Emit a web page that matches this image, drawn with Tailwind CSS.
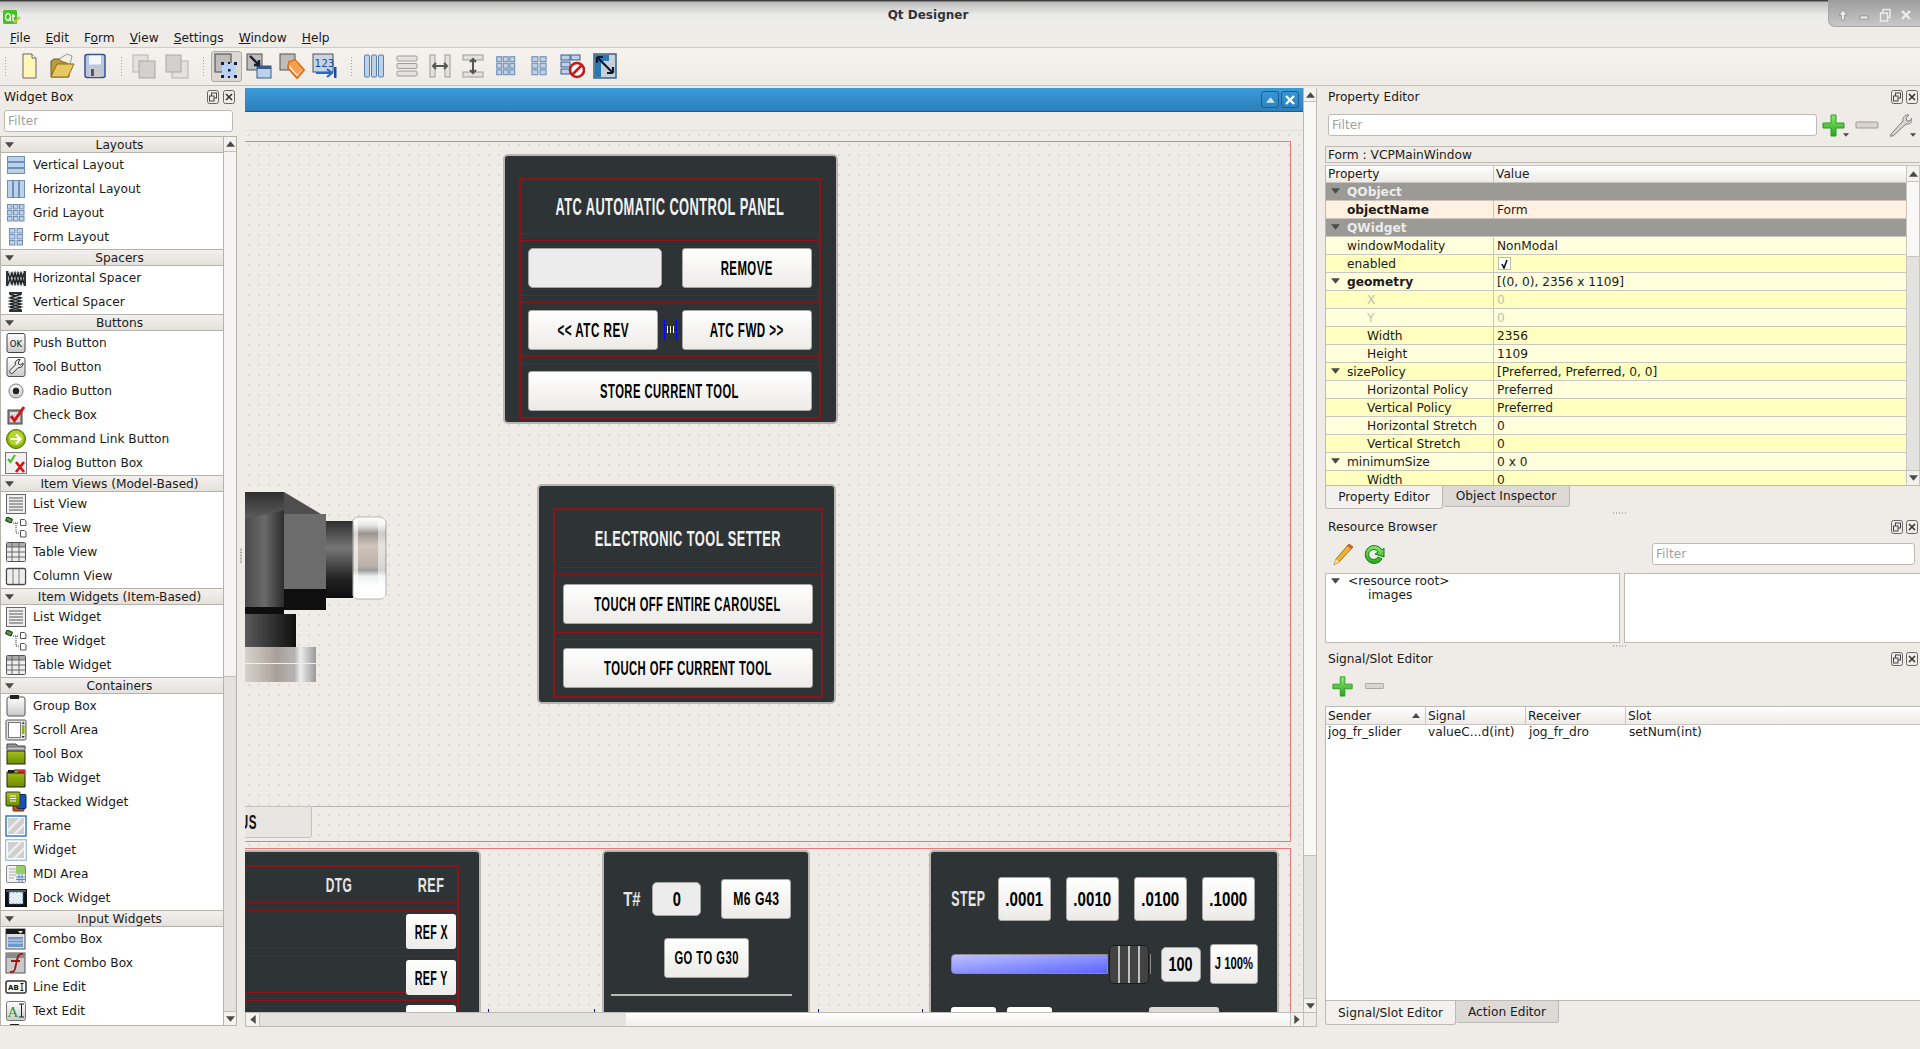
<!DOCTYPE html>
<html lang="en">
<head>
<meta charset="UTF-8" />
<title>Qt Designer</title>
<script src="https://cdn.jsdelivr.net/npm/@tailwindcss/browser@4"></script>
</head>
<body class="w-[1920px] h-[1049px] overflow-hidden flex flex-col bg-[#efebe7] text-[12.2px] leading-[12px] text-[#1a1a1a] font-['DejaVu_Sans',sans-serif]">

<svg class="absolute w-0 h-0">
  <defs>
    <linearGradient id="chromeH" x1="0" x2="1" y1="0" y2="0"><stop offset="0" stop-color="#d9d3cd"/><stop offset=".45" stop-color="#a99f98"/><stop offset=".7" stop-color="#b5b5b5"/><stop offset=".78" stop-color="#ececec"/><stop offset="1" stop-color="#9a9a9a"/></linearGradient>
    <linearGradient id="chromeV" x1="0" x2="0" y1="0" y2="1"><stop offset="0" stop-color="#fff"/><stop offset=".1" stop-color="#e8e8e8"/><stop offset=".2" stop-color="#9c9490"/><stop offset=".35" stop-color="#cfc5bd"/><stop offset=".6" stop-color="#b9b0a9"/><stop offset=".65" stop-color="#9d9d9d"/><stop offset=".72" stop-color="#ecf0f0"/><stop offset=".85" stop-color="#fff"/><stop offset="1" stop-color="#fff"/></linearGradient>
    <linearGradient id="bodyH" x1="0" x2="1" y1="0" y2="0"><stop offset="0" stop-color="#4a4a4a"/><stop offset=".5" stop-color="#6a6a6a"/><stop offset="1" stop-color="#2c2c2c"/></linearGradient>
    <linearGradient id="lowH" x1="0" x2="1" y1="0" y2="0"><stop offset="0" stop-color="#5a5a5a"/><stop offset="1" stop-color="#0f0f0f"/></linearGradient>
    <linearGradient id="neckV" x1="0" x2="0" y1="0" y2="1"><stop offset="0" stop-color="#2e2e2e"/><stop offset=".35" stop-color="#777"/><stop offset=".75" stop-color="#222"/><stop offset="1" stop-color="#0d0d0d"/></linearGradient>
    <linearGradient id="topV" x1="0" x2="0" y1="0" y2="1"><stop offset="0" stop-color="#2e2e2e"/><stop offset="1" stop-color="#5c5c5c"/></linearGradient>
    <linearGradient id="green" x1="0" x2="0" y1="0" y2="1"><stop offset="0" stop-color="#8de873"/><stop offset="1" stop-color="#22a51a"/></linearGradient>
    <linearGradient id="olive" x1="0" x2="0" y1="0" y2="1"><stop offset="0" stop-color="#a9c21a"/><stop offset="1" stop-color="#6c8c00"/></linearGradient>
    <linearGradient id="paper" x1="0" x2="0" y1="0" y2="1"><stop offset="0" stop-color="#ffffff"/><stop offset="1" stop-color="#c9c9c9"/></linearGradient>
  </defs>
  <symbol id="vl" viewBox="0 0 22 22"><g fill="#bcd2ea" stroke="#6f8fb3"><rect x="2.5" y="2.5" width="17" height="5"/><rect x="2.5" y="8.5" width="17" height="5"/><rect x="2.5" y="14.5" width="17" height="5"/></g></symbol>
  <symbol id="hl" viewBox="0 0 22 22"><g fill="#bcd2ea" stroke="#6f8fb3"><rect x="2.5" y="2.5" width="5" height="17"/><rect x="8.5" y="2.5" width="5" height="17"/><rect x="14.5" y="2.5" width="5" height="17"/></g></symbol>
  <symbol id="gl" viewBox="0 0 22 22"><g fill="#bcd2ea" stroke="#6f8fb3"><rect x="2.5" y="2.5" width="4.5" height="4.5"/><rect x="8.5" y="2.5" width="4.5" height="4.5"/><rect x="14.5" y="2.5" width="4.5" height="4.5"/><rect x="2.5" y="8.5" width="4.5" height="4.5"/><rect x="8.5" y="8.5" width="4.5" height="4.5"/><rect x="14.5" y="8.5" width="4.5" height="4.5"/><rect x="2.5" y="14.5" width="4.5" height="4.5"/><rect x="8.5" y="14.5" width="4.5" height="4.5"/><rect x="14.5" y="14.5" width="4.5" height="4.5"/></g></symbol>
  <symbol id="fl" viewBox="0 0 22 22"><g fill="#bcd2ea" stroke="#6f8fb3"><rect x="4.5" y="2.5" width="5.5" height="4.5"/><rect x="12" y="2.5" width="5.5" height="4.5"/><rect x="4.5" y="8.5" width="5.5" height="4.5"/><rect x="12" y="8.5" width="5.5" height="4.5"/><rect x="4.5" y="14.5" width="5.5" height="4.5"/><rect x="12" y="14.5" width="5.5" height="4.5"/></g></symbol>
  <symbol id="hs" viewBox="0 0 22 22"><rect x="1" y="4" width="2.5" height="15" fill="#333"/><rect x="18.5" y="4" width="2.5" height="15" fill="#333"/><rect x="3" y="5" width="16" height="13" fill="#b8c4cc"/><path d="M3 6l4 11 3-11 3 11 3-11 3 11M3 17l4-11 3 11 3-11 3 11 3-11" fill="none" stroke="#222" stroke-width="1.4"/></symbol>
  <symbol id="vs" viewBox="0 0 22 22"><rect x="4" y="1" width="13" height="2.5" fill="#333"/><rect x="4" y="18.5" width="13" height="2.5" fill="#333"/><rect x="5" y="3" width="11" height="16" fill="#b8c4cc"/><path d="M5 3l11 4-11 3 11 3-11 3 11 3M16 3L5 7l11 3-11 3 11 3-11 3" fill="none" stroke="#222" stroke-width="1.4"/></symbol>
  <symbol id="tb" viewBox="0 0 22 22"><rect x="2" y="1.5" width="18" height="19" rx="2" fill="url(#paper)" stroke="#555"/><path d="M14 3.5a4 4 0 0 0-3.6 5.4L5 14.3a2 2 0 0 0 2.8 2.8l5.4-5.4A4 4 0 0 0 18 7l-2.6 2-2-1 .3-2.4 1.6-2z" fill="#e8e8e8" stroke="#333"/></symbol>
  <symbol id="rb" viewBox="0 0 22 22"><circle cx="11" cy="11" r="7" fill="url(#paper)" stroke="#777"/><circle cx="11" cy="11" r="3.2" fill="#222"/></symbol>
  <symbol id="cb" viewBox="0 0 22 22"><rect x="3" y="6" width="14" height="14" fill="#8c8c8c" stroke="#444"/><rect x="5" y="8" width="10" height="10" fill="#ddd"/><path d="M6 12l3.5 4.5L19 3" fill="none" stroke="#d41217" stroke-width="3"/></symbol>
  <symbol id="cl" viewBox="0 0 22 22"><circle cx="11" cy="11" r="9.5" fill="#8ab40c" stroke="#4e6c00"/><circle cx="11" cy="10" r="7.5" fill="#b5d52a"/><path d="M5.5 11h9M11 6.5l4.5 4.5-4.5 4.5" fill="none" stroke="#fff" stroke-width="2.2"/></symbol>
  <symbol id="db" viewBox="0 0 22 22"><rect x=".5" y=".5" width="21" height="21" fill="#f1f1f1" stroke="#777"/><path d="M3 7l2.5 3L10 3" fill="none" stroke="#4bb82a" stroke-width="2"/><path d="M11 10l8 10M19 10l-8 10" stroke="#d41217" stroke-width="2.6"/></symbol>
  <symbol id="lv" viewBox="0 0 22 22"><rect x="1.5" y="1.5" width="19" height="19" fill="#efefef" stroke="#666"/><path d="M4 5h14M4 8h14M4 11h14M4 14h14M4 17h14" stroke="#8b8b8b" stroke-width="1.6"/></symbol>
  <symbol id="tv" viewBox="0 0 22 22"><rect x="1" y="1" width="6" height="4" rx="1" fill="#4aa32a" stroke="#224" transform="rotate(25 4 3)"/><path d="M8 6h6M11 6v10h3" fill="none" stroke="#333" stroke-dasharray="1 1"/><path d="M15.5 2.5h4l1.5 1.5v4.5h-5.5zM15.5 13.5h4l1.5 1.5v5h-5.5z" fill="#fff" stroke="#555"/></symbol>
  <symbol id="tbv" viewBox="0 0 22 22"><rect x="1.5" y="1.5" width="19" height="19" rx="1" fill="#eee" stroke="#555"/><rect x="2" y="2" width="18" height="4" fill="#aaa"/><path d="M1.5 6h19M1.5 11h19M1.5 16h19M7 1.5v19M14 1.5v19" stroke="#666"/></symbol>
  <symbol id="cv" viewBox="0 0 22 22"><rect x="1.5" y="3.5" width="19" height="16" rx="1.5" fill="#fff" stroke="#444" stroke-width="1.3"/><path d="M8 3.5v16M14 3.5v16" stroke="#666"/><rect x="3" y="5" width="4" height="13" fill="#eee"/><rect x="9" y="5" width="4" height="13" fill="#eee"/><rect x="15" y="5" width="4" height="13" fill="#eee"/></symbol>
  <symbol id="gb" viewBox="0 0 22 22"><rect x="2" y="2" width="18" height="19" rx="2" fill="url(#paper)" stroke="#555"/><rect x="5" y="0" width="9" height="4" fill="#222"/></symbol>
  <symbol id="sa" viewBox="0 0 22 22"><rect x="1" y="1" width="20" height="20" rx="1.5" fill="#e4e4e4" stroke="#555"/><rect x="3.5" y="3.5" width="12" height="15" fill="#fff" stroke="#777"/><rect x="17" y="6" width="2.5" height="9" fill="#8ab40c"/><path d="M18.2 2.8l-1.5 2h3zM18.2 19l-1.5-2h3z" fill="#222"/></symbol>
  <symbol id="tx" viewBox="0 0 22 22"><path d="M2 1h9l2 2h7v3H2z" fill="#999" stroke="#444"/><path d="M2 4h18v3H2z" fill="#ccc" stroke="#666"/><rect x="2" y="8" width="18" height="13" fill="url(#olive)" stroke="#222"/></symbol>
  <symbol id="tw" viewBox="0 0 22 22"><path d="M2 5h7V3h11v17H2z" fill="url(#olive)" stroke="#222"/><rect x="3" y="3" width="6" height="3" fill="#1c1c1c"/><rect x="13" y="3" width="7" height="3" fill="#d12b2b"/><path d="M3 6h16" stroke="#222"/></symbol>
  <symbol id="sw" viewBox="0 0 22 22"><rect x="8" y="6" width="11" height="14" rx="1" fill="#c85010" stroke="#5a2a00"/><rect x="12" y="3.5" width="9" height="14" rx="1" fill="#1552b8" stroke="#0a2a60"/><rect x="1" y="1" width="14" height="14" rx="1" fill="url(#olive)" stroke="#333"/><path d="M5 5h6M5 7.5h6M5 10h6" stroke="#fff" stroke-width="1.2"/></symbol>
  <symbol id="fr" viewBox="0 0 22 22"><rect x="1" y="1" width="20" height="20" fill="#fff" stroke="#2a6fc4" stroke-width="1.4"/><rect x="3" y="3" width="16" height="16" fill="#cfcfcf"/><path d="M3 14l11-11h3L3 17zM8 19L19 8v3l-8 8z" fill="#f1f1f1"/></symbol>
  <symbol id="wd" viewBox="0 0 22 22"><rect x=".8" y=".8" width="20.4" height="20.4" fill="#fff" stroke="#7aa7d8"/><rect x="3" y="3" width="16" height="16" fill="#cfcfcf"/><path d="M3 14l11-11h3L3 17zM8 19L19 8v3l-8 8z" fill="#f1f1f1"/></symbol>
  <symbol id="mdi" viewBox="0 0 22 22"><rect x="1.5" y="2.5" width="19" height="17" rx="1.5" fill="#f2f2f2" stroke="#888"/><path d="M4 6h7M4 9h7M4 12h7M4 15h5" stroke="#aaa"/><rect x="11" y="3" width="9" height="8" fill="#96cf6a"/><rect x="11" y="11" width="9" height="8" fill="#e8eef6"/><path d="M11 14h9M11 16.5h9M14 11v8M17 11v8" stroke="#5a86c8"/></symbol>
  <symbol id="dw" viewBox="0 0 22 22"><rect x="0" y="2" width="22" height="18" fill="#111"/><rect x="1" y="3" width="20" height="2" fill="#555"/><rect x="4" y="5" width="14" height="12" fill="#e6ecf2" stroke="#2a6fc4" stroke-dasharray="2 1.5"/></symbol>
  <symbol id="co" viewBox="0 0 22 22"><rect x="1" y="1" width="19" height="20" fill="#ddd" stroke="#555"/><rect x="1" y="1" width="19" height="5" fill="#1a1a1a"/><path d="M13 3h5l-2.5 2.5z" fill="#fff"/><rect x="3" y="9" width="15" height="10" fill="#6e98c8"/><path d="M3 12h15M3 15h15" stroke="#cfdfee"/></symbol>
  <symbol id="fc" viewBox="0 0 22 22"><rect x="1" y="1" width="19" height="20" fill="#c9c9c9" stroke="#555"/><rect x="1" y="1" width="19" height="5" fill="#8c8c8c"/><path d="M18 2c-4-1-5 2-6 6l-2 9c-1 3-2 3-5 3M6 9h9" fill="none" stroke="#a01515" stroke-width="1.8"/></symbol>
  <symbol id="flt" viewBox="0 0 12 14"><rect x=".5" y=".5" width="11" height="13" rx="2" fill="none" stroke="#666"/><rect x="4.5" y="3" width="5" height="5" fill="none" stroke="#444"/><rect x="2.5" y="6" width="4.5" height="5" fill="#efebe7" stroke="#444"/></symbol>
  <symbol id="cls" viewBox="0 0 12 14"><rect x=".5" y=".5" width="11" height="13" rx="2" fill="none" stroke="#666"/><path d="M3 4l6 6M9 4l-6 6" stroke="#333" stroke-width="1.6"/></symbol>
  <symbol id="plus" viewBox="0 0 24 24"><path d="M9 2h5v8h8v5h-8v8H9v-8H1v-5h8z" fill="url(#green)" stroke="#2f9a22"/></symbol>
  <symbol id="minus" viewBox="0 0 24 12"><rect x="1" y="3" width="22" height="6" rx="1" fill="#d8d6d2" stroke="#9d9b97"/></symbol>
  <symbol id="tri" viewBox="0 0 10 6"><path d="M0 0h10L5 6z" fill="#4a4a4a"/></symbol>
</svg>

<!-- title bar -->
<div class="relative h-[29px] shrink-0 flex items-center justify-center pr-[64px] bg-[linear-gradient(#3f3f3f_0,#3f3f3f_1px,#bdbdbd_2px,#ebebea_15px,#efeeec_29px)]">
  <svg class="absolute left-[3px] top-[9px]" width="18" height="16" viewBox="0 0 18 16"><rect x="0" y="1" width="14" height="14" rx="1.5" fill="#44c41f"/><path d="M5 4.500a2.500 3.500 0 1 0 .01 0zM6 9l2 3M10 5v6q0 1 2 1M9 7h3" fill="none" stroke="#fff" stroke-width="1.300"/><path d="M11 14l6-6" stroke="#e8b030" stroke-width="2"/></svg>
  <span class="font-bold text-[12px] text-[#333] pt-[1px]">Qt Designer</span>
  <div class="absolute right-0 top-0 w-[92px] h-[27px] rounded-bl-[7px] border-l border-b border-[#a6a6a6] flex items-center justify-around px-[4px] pt-[3px] bg-linear-to-b from-[#9d9d9d] to-[#c8c8c8]">
    <svg width="12" height="12" viewBox="0 0 12 12"><path d="M6 1l4 5H7.5v5h-3V6H2z" fill="#eee" stroke="#777" stroke-width=".6"/></svg>
    <svg width="12" height="12" viewBox="0 0 12 12"><rect x="2" y="7" width="8" height="3" fill="#eee" stroke="#777" stroke-width=".6"/></svg>
    <svg width="12" height="14" viewBox="0 0 12 14"><rect x="4" y="1.5" width="7" height="8" fill="none" stroke="#eee" stroke-width="1.4"/><rect x="1.5" y="5" width="7" height="8" fill="#bbb" stroke="#eee" stroke-width="1.4"/></svg>
    <svg width="12" height="12" viewBox="0 0 12 12"><path d="M2 2l8 8M10 2l-8 8" stroke="#eee" stroke-width="2.4"/></svg>
  </div>
</div>

<!-- menu bar -->
<div class="h-[19px] shrink-0 flex items-center gap-[15px] pl-[10px] pb-[1px] border-b border-[#d0ccc7]">
  <span><u>F</u>ile</span><span><u>E</u>dit</span><span>F<u>o</u>rm</span><span><u>V</u>iew</span><span><u>S</u>ettings</span><span><u>W</u>indow</span><span><u>H</u>elp</span>
</div>

<!-- toolbar -->
<div class="h-[38px] shrink-0 flex items-center pb-[1px] border-b border-[#c3bfba] bg-linear-to-b from-[#f6f3ef] to-[#efebe7]">
  <div class="w-[12.5px] h-[20px] flex justify-center"><div class="w-[4px] h-full bg-[radial-gradient(#a5a29d_0.7px,transparent_0.9px)] bg-[length:3px_3px]"></div></div>
  <div class="w-[33px] flex justify-center"><svg width="24" height="26" viewBox="0 0 24 26"><path d="M6 1h9l4 4v20H6z" fill="#fff6b8" stroke="#666"/><path d="M15 1v4h4" fill="#fff" stroke="#666"/></svg></div>
  <div class="w-[33px] flex justify-center"><svg width="26" height="26" viewBox="0 0 26 26"><path d="M2 24V8l3-2h6l2 3h7v15z" fill="#b89a3c" stroke="#6e5a1a"/><path d="M10 6l8-5 5 2-2 8" fill="#f4efe0" stroke="#999"/><path d="M2 24L8 11h17l-6 13z" fill="#e8c860" stroke="#8a6e1e"/></svg></div>
  <div class="w-[33px] flex justify-center"><svg width="24" height="26" viewBox="0 0 24 26"><rect x="2" y="1.5" width="20" height="23" rx="2" fill="#b9c8dc" stroke="#34548c" stroke-width="1.5"/><rect x="6" y="2.5" width="12" height="9" fill="#f4f6fa"/><rect x="6" y="15" width="12" height="9" fill="#c9c9c9"/><rect x="8" y="16" width="3" height="7" fill="#556"/></svg></div>
  <div class="w-[16px] h-[20px] flex justify-center pl-[5px]"><div class="w-[4px] h-full bg-[radial-gradient(#a5a29d_0.7px,transparent_0.9px)] bg-[length:3px_3px]"></div></div>
  <div class="w-[33px] flex justify-center"><svg width="24" height="26" viewBox="0 0 24 26"><rect x="1" y="2" width="15" height="17" fill="#e4e2de" stroke="#b5b3ae"/><rect x="7" y="8" width="16" height="17" fill="#d3d1cd" stroke="#a9a7a2"/></svg></div>
  <div class="w-[33px] flex justify-center"><svg width="24" height="26" viewBox="0 0 24 26"><rect x="7" y="8" width="16" height="17" fill="#e4e2de" stroke="#b5b3ae"/><rect x="1" y="2" width="15" height="17" fill="#d3d1cd" stroke="#a9a7a2"/></svg></div>
  <div class="w-[16px] h-[20px] flex justify-center pl-[5px]"><div class="w-[4px] h-full bg-[radial-gradient(#a5a29d_0.7px,transparent_0.9px)] bg-[length:3px_3px]"></div></div>
  <div class="w-[33px] flex justify-center"><div class="w-[31px] h-[31px] flex items-center justify-center rounded-[3px] border border-[#aeaba6] bg-[#dcd9d5]"><svg width="26" height="26" viewBox="0 0 26 26"><rect x="2" y="1" width="16" height="18" fill="#bfbdb9" stroke="#444"/><rect x="9" y="10" width="14" height="14" fill="#bcd2f4"/><g fill="#12203c"><rect x="8" y="9" width="3" height="3"/><rect x="21" y="9" width="3" height="3"/><rect x="8" y="22" width="3" height="3"/><rect x="21" y="22" width="3" height="3"/><rect x="15" y="16" width="2.5" height="2.5"/><rect x="15" y="9" width="2" height="2"/><rect x="15" y="23" width="2" height="2"/></g></svg></div></div>
  <div class="w-[33px] flex justify-center"><svg width="26" height="26" viewBox="0 0 26 26"><rect x="1" y="1" width="15" height="16" fill="#bfbdb9" stroke="#555"/><rect x="11" y="13" width="14" height="12" fill="#bcd2ea" stroke="#3a5a88"/><rect x="11" y="13" width="14" height="3" fill="#3a5a88"/><path d="M4 3l9 9M13 7v5H8" fill="none" stroke="#12203c" stroke-width="2.4"/></svg></div>
  <div class="w-[33px] flex justify-center"><svg width="26" height="26" viewBox="0 0 26 26"><rect x="1" y="1" width="15" height="16" fill="#bfbdb9" stroke="#555"/><path d="M10 9l6-2 9 10-7 8-9-10z" fill="#fff" stroke="#e0701a" stroke-width="2"/><path d="M11 9l6-1 6 9-5 5-7-9z" fill="#f6a050"/></svg></div>
  <div class="w-[33px] flex justify-center"><svg width="26" height="26" viewBox="0 0 26 26"><rect x="1" y="1" width="20" height="18" fill="#c8d4e4" stroke="#555"/><text x="2.5" y="14" font-size="10.5" font-family="DejaVu Sans" fill="#1a4aa8">123</text><path d="M4 20h15M15 16l5 4-5 4" fill="none" stroke="#2a6ac4" stroke-width="2.2"/><rect x="22" y="14" width="2.5" height="11" fill="#1a4aa8"/></svg></div>
  <div class="w-[16px] h-[20px] flex justify-center pl-[5px]"><div class="w-[4px] h-full bg-[radial-gradient(#a5a29d_0.7px,transparent_0.9px)] bg-[length:3px_3px]"></div></div>
  <div class="w-[33px] flex justify-center"><svg width="24" height="26" viewBox="0 0 24 26"><g fill="#bcd2ea" stroke="#5a7fa8"><rect x="2.5" y="2" width="5" height="22" rx="1"/><rect x="9.5" y="2" width="5" height="22" rx="1"/><rect x="16.5" y="2" width="5" height="22" rx="1"/></g></svg></div>
  <div class="w-[33px] flex justify-center"><svg width="24" height="26" viewBox="0 0 24 26"><g fill="#e4e2de" stroke="#9f9d98"><rect x="2" y="3" width="20" height="5" rx="1"/><rect x="2" y="10.5" width="20" height="5" rx="1"/><rect x="2" y="18" width="20" height="5" rx="1"/></g></svg></div>
  <div class="w-[33px] flex justify-center"><svg width="24" height="26" viewBox="0 0 24 26"><g fill="#e4e2de" stroke="#9f9d98"><rect x="2" y="2" width="5" height="22"/><rect x="17" y="2" width="5" height="22"/></g><path d="M6 13h12M8 10l-3 3 3 3M16 10l3 3-3 3" fill="none" stroke="#555" stroke-width="2"/></svg></div>
  <div class="w-[33px] flex justify-center"><svg width="24" height="26" viewBox="0 0 24 26"><g fill="#e4e2de" stroke="#9f9d98"><rect x="2" y="2" width="20" height="5"/><rect x="2" y="19" width="20" height="5"/></g><path d="M12 6v14M9 9l3-3 3 3M9 17l3 3 3-3" fill="none" stroke="#555" stroke-width="2"/></svg></div>
  <div class="w-[33px] flex justify-center"><svg width="24" height="24" viewBox="0 0 22 22"><use href="#gl"/></svg></div>
  <div class="w-[33px] flex justify-center"><svg width="24" height="24" viewBox="0 0 22 22"><use href="#fl"/></svg></div>
  <div class="w-[33px] flex justify-center"><svg width="26" height="26" viewBox="0 0 26 26"><g fill="#bcd2ea" stroke="#3a5a88"><rect x="2" y="2" width="9" height="5"/><rect x="12" y="2" width="9" height="5"/><rect x="2" y="9" width="9" height="5"/><rect x="2" y="16" width="9" height="5"/></g><circle cx="18" cy="17" r="7" fill="#fff" stroke="#c41a1a" stroke-width="2.6"/><path d="M13 22l10-10" stroke="#c41a1a" stroke-width="2.6"/></svg></div>
  <div class="w-[33px] flex justify-center"><svg width="24" height="26" viewBox="0 0 24 26"><rect x="1" y="1" width="22" height="24" fill="#c8d0d8" stroke="#2a5a88" stroke-width="1.4"/><path d="M2 2h14v6h-8v16H2z" fill="#2a7ab0"/><path d="M4 4l16 16M4 4h6M4 4v6M20 20h-6M20 20v-6" fill="none" stroke="#0a1a30" stroke-width="2.2"/></svg></div>
</div>

<!-- main area -->
<div class="flex h-[940px] shrink-0">
  <!-- widget box -->
  <div class="w-[237px] shrink-0 flex flex-col">
    <div class="h-[21px] flex items-center justify-between pl-[4px] pr-[1px] shrink-0">
      <span>Widget Box</span>
      <span class="flex gap-[4px] mr-[1px]"><svg width="12" height="14"><use href="#flt"/></svg><svg width="12" height="14"><use href="#cls"/></svg></span>
    </div>
    <div class="ml-[4px] mt-[3px] w-[229px] h-[22px] shrink-0 flex items-center pl-[3px] rounded-[3px] bg-white border border-[#bdbab5] text-[#a2a2a2]">Filter</div>
    <div class="mt-[4px] h-[891px] flex border-b border-[#b6b3ae] overflow-hidden">
      <div id="widgetTree" class="w-[223px] bg-white border-l border-[#b6b3ae] overflow-hidden"></div>
      <div class="w-[14px] border-l border-r border-t border-[#b6b3ae] flex flex-col bg-[#e4e2df]">
        <div class="h-[15px] bg-[#f4f2ef] border-b border-[#c3c0bb] flex items-center justify-center"><svg width="9" height="6" viewBox="0 0 10 6"><path d="M0 6h10L5 0z" fill="#4a4a4a"/></svg></div>
        <div class="h-[525px] bg-[#f6f4f2] border-b border-[#c3c0bb]"></div>
        <div class="flex-1"></div>
        <div class="h-[14px] bg-[#f4f2ef] border-t border-[#c3c0bb] flex items-center justify-center"><svg width="9" height="6"><use href="#tri"/></svg></div>
      </div>
    </div>
  </div>

  <div class="w-[8px] shrink-0 flex items-center justify-center"><div class="w-[2px] h-[16px] bg-[radial-gradient(#a5a29d_0.7px,transparent_0.9px)] bg-[length:2px_3px]"></div></div>

  <!-- mdi area -->
  <div class="w-[1072px] shrink-0 flex flex-col pt-[2px]">
    <div class="flex h-[924px] shrink-0">
      <div class="w-[1058px] flex flex-col">
        <div class="h-[24px] shrink-0 flex items-center justify-end gap-[2px] pr-[4px] border-b border-[#1f5f90] bg-linear-to-b from-[#3a9ad8] to-[#2b80bc]">
          <div class="w-[18px] h-[17px] rounded-[3px] border border-[#1d5c8c] flex items-center justify-center"><svg width="9" height="6" viewBox="0 0 10 6"><path d="M0 6h10L5 0z" fill="#cfe4f4"/></svg></div>
          <div class="w-[18px] h-[17px] rounded-[3px] border border-[#1d5c8c] flex items-center justify-center"><svg width="10" height="10" viewBox="0 0 10 10"><path d="M1 1l8 8M9 1l-8 8" stroke="#fff" stroke-width="2.4"/></svg></div>
        </div>
        <div class="h-[19px] shrink-0 border-b border-[#e2dfda]"></div>

        <!-- form canvas -->
        <div class="relative h-[881px] shrink-0 overflow-hidden bg-[#efebe7] bg-[radial-gradient(circle_at_4px_4px,#9a9895_0.55px,transparent_0.75px)] bg-[length:10px_10px]">
          <div class="absolute left-[-2px] top-[10px] w-[1048px] h-[701px] border border-[#ee7777]"></div>
          <div class="absolute left-[-2px] top-[717px] w-[1048px] h-[300px] border border-[#ee7777]"></div>
          <div class="absolute left-0 top-[675px] w-[1044px] h-px bg-[#b8b5b0]"></div>
          <div class="absolute left-[-20px] top-[675px] w-[87px] h-[32px] flex items-center justify-end pr-[54px] rounded-b-[3px] border border-[#c5c2bd] bg-[#e8e5e2] font-bold text-[#111] font-['Liberation_Sans',sans-serif]"><span class="inline-block whitespace-nowrap text-[20px] tracking-[0.8px] origin-right scale-x-[0.58]">STATUS</span></div>

          <!-- spindle drawing -->
          <svg class="absolute left-0 top-[361px]" width="142" height="191" viewBox="0 0 142 191">
            <rect x="0" y="0" width="39" height="122" fill="url(#bodyH)"/>
            <path d="M0 0h39v18q-20 6-39 8z" fill="url(#topV)"/>
            <path d="M39 0l42 25v4H39z" fill="#4e4e4e"/>
            <rect x="39" y="22" width="42" height="75" fill="#6c6c6c"/>
            <rect x="39" y="97" width="42" height="21" fill="#0f0f0f"/>
            <rect x="0" y="115" width="39" height="7" fill="#0e0e0e"/>
            <rect x="0" y="122" width="51" height="33" fill="url(#lowH)"/>
            <rect x="0" y="155" width="71" height="35" fill="url(#chromeH)"/>
            <rect x="0" y="171" width="71" height="1" fill="#eee"/>
            <rect x="81" y="29" width="27" height="77" fill="url(#neckV)"/>
            <path d="M108 28l3-3h26l4 4v74l-4 4h-26l-3-3z" fill="url(#chromeV)" stroke="#b5b3ad"/>
            <rect x="109" y="27" width="4" height="79" fill="#fff" opacity=".6"/>
            <rect x="133" y="27" width="7" height="79" fill="#fff" opacity=".5"/>
          </svg>

          <!-- ATC panel -->
          <div class="absolute left-[258px] top-[23px] w-[335px] h-[270px] rounded-[5px] border-2 border-[#b8b7b0] bg-[#2e3436] pt-[22px] pl-[14px] font-['Liberation_Sans',sans-serif] font-bold">
            <div class="w-[302px] h-[241px] border-x-2 border-[#8a1518] flex flex-col gap-[6px]">
              <div class="h-[56px] shrink-0 flex items-center justify-center border-t-2 border-b border-[#8a1518] text-[#f2f2f2]"><span class="inline-block whitespace-nowrap text-[24px] tracking-[0.8px] scale-x-[0.535]">ATC AUTOMATIC CONTROL PANEL</span></div>
              <div class="h-[56px] shrink-0 flex items-center justify-between px-[7px] border-y border-[#8a1518]">
                <div class="w-[134px] h-[40px] rounded-[5px] bg-[#ececec] border border-[#a5a5a5]"></div>
                <div class="w-[130px] h-[40px] flex items-center justify-center rounded-[3px] border border-[#a9a7a2] bg-linear-to-b from-white to-[#edebe8] text-black"><span class="inline-block whitespace-nowrap text-[20px] tracking-[0.8px] scale-x-[0.57]">REMOVE</span></div>
              </div>
              <div class="h-[55px] shrink-0 flex items-center justify-between px-[7px] border-y border-[#8a1518]">
                <div class="w-[130px] h-[40px] flex items-center justify-center rounded-[3px] border border-[#a9a7a2] bg-linear-to-b from-white to-[#edebe8] text-black"><span class="inline-block whitespace-nowrap text-[20px] tracking-[0.8px] scale-x-[0.585]">&lt;&lt; ATC REV</span></div>
                <svg width="13" height="21" viewBox="0 0 13 21"><path d="M.5 0v21M12.5 0v21" stroke="#0000ff"/><path d="M.5 10.5h12" stroke="#0000ff"/><path d="M3.5 7v7M6.5 7v7M9.5 7v7" stroke="#fff"/></svg>
                <div class="w-[130px] h-[40px] flex items-center justify-center rounded-[3px] border border-[#a9a7a2] bg-linear-to-b from-white to-[#edebe8] text-black"><span class="inline-block whitespace-nowrap text-[20px] tracking-[0.8px] scale-x-[0.58]">ATC FWD &gt;&gt;</span></div>
              </div>
              <div class="h-[56px] shrink-0 flex items-center px-[7px] border-t border-b-2 border-[#8a1518]">
                <div class="w-full h-[40px] flex items-center justify-center rounded-[3px] border border-[#a9a7a2] bg-linear-to-b from-white to-[#edebe8] text-black"><span class="inline-block whitespace-nowrap text-[20px] tracking-[0.8px] scale-x-[0.562]">STORE CURRENT TOOL</span></div>
              </div>
            </div>
          </div>

          <!-- tool setter panel -->
          <div class="absolute left-[292px] top-[353px] w-[299px] h-[220px] rounded-[5px] border-2 border-[#b8b7b0] bg-[#2e3436] pt-[22px] pl-[13.5px] font-['Liberation_Sans',sans-serif] font-bold">
            <div class="w-[270px] h-[190px] border-x-2 border-[#8a1518] flex flex-col gap-[6px]">
              <div class="h-[60px] shrink-0 flex items-center justify-center border-t-2 border-b border-[#8a1518] text-[#f2f2f2]"><span class="inline-block whitespace-nowrap text-[22px] tracking-[0.8px] scale-x-[0.582]">ELECTRONIC TOOL SETTER</span></div>
              <div class="h-[59px] shrink-0 flex items-center justify-center border-y border-[#8a1518]">
                <div class="w-[250px] h-[40px] flex items-center justify-center rounded-[3px] border border-[#a9a7a2] bg-linear-to-b from-white to-[#edebe8] text-black"><span class="inline-block whitespace-nowrap text-[20px] tracking-[0.8px] scale-x-[0.56]">TOUCH OFF ENTIRE CAROUSEL</span></div>
              </div>
              <div class="h-[59px] shrink-0 flex items-center justify-center border-t border-b-2 border-[#8a1518]">
                <div class="w-[250px] h-[40px] flex items-center justify-center rounded-[3px] border border-[#a9a7a2] bg-linear-to-b from-white to-[#edebe8] text-black"><span class="inline-block whitespace-nowrap text-[20px] tracking-[0.8px] scale-x-[0.563]">TOUCH OFF CURRENT TOOL</span></div>
              </div>
            </div>
          </div>

          <!-- DRO panel, clipped left and bottom -->
          <div class="absolute left-[-20px] top-[719px] w-[256px] h-[300px] rounded-[5px] border-2 border-[#b8b7b0] bg-[#2e3436] pt-[13px] font-['Liberation_Sans',sans-serif] font-bold">
            <div class="w-[232px] h-[200px] border-r-2 border-[#8a1518] flex flex-col gap-[7px]">
              <div class="h-[38px] shrink-0 flex items-center justify-end gap-[37px] pr-[1px] border-t-2 border-b border-[#8a1518] text-[#e6e6e6] text-[21px] tracking-[0.8px]"><span class="w-[60px] text-center whitespace-nowrap scale-x-[0.57]">DTG</span><span class="w-[50px] text-center whitespace-nowrap scale-x-[0.6]">REF</span></div>
              <div class="h-[38px] shrink-0 flex justify-end pr-[1px] border-y border-[#8a1518]"><div class="mt-[3px] w-[50px] h-[35px] flex items-center justify-center rounded-[3px] bg-linear-to-b from-white to-[#edebe8] text-black"><span class="inline-block whitespace-nowrap text-[20px] tracking-[0.8px] scale-x-[0.53]">REF X</span></div></div>
              <div class="h-[38px] shrink-0 flex justify-end pr-[1px] border-y border-[#8a1518]"><div class="mt-[4px] w-[50px] h-[35px] flex items-center justify-center rounded-[3px] bg-linear-to-b from-white to-[#edebe8] text-black"><span class="inline-block whitespace-nowrap text-[20px] tracking-[0.8px] scale-x-[0.53]">REF Y</span></div></div>
              <div class="h-[38px] shrink-0 flex justify-end pr-[1px] border-y border-[#8a1518]"><div class="mt-[4px] w-[50px] h-[35px] rounded-[3px] bg-linear-to-b from-white to-[#edebe8]"></div></div>
            </div>
          </div>

          <!-- tool number panel -->
          <div class="absolute left-[357px] top-[719px] w-[208px] h-[300px] rounded-[5px] border-2 border-[#b8b7b0] bg-[#2e3436] pt-[27px] font-['Liberation_Sans',sans-serif] font-bold">
            <div class="flex items-center pl-[16px]">
              <span class="w-[22px] text-center text-[#e6e6e6] text-[21px] whitespace-nowrap scale-x-[0.71]">T#</span>
              <div class="ml-[10px] w-[49px] h-[34px] flex items-center justify-center rounded-[5px] bg-[#ececec] border border-[#a5a5a5] text-black"><span class="inline-block text-[21px] scale-x-[0.7]">0</span></div>
              <div class="ml-[20px] w-[70px] h-[40px] flex items-center justify-center rounded-[3px] border border-[#a9a7a2] bg-linear-to-b from-white to-[#edebe8] text-black"><span class="inline-block whitespace-nowrap text-[18px] tracking-[0.8px] scale-x-[0.675]">M6 G43</span></div>
            </div>
            <div class="ml-[60px] mt-[19px] w-[85px] h-[40px] flex items-center justify-center rounded-[3px] border border-[#a9a7a2] bg-linear-to-b from-white to-[#edebe8] text-black"><span class="inline-block whitespace-nowrap text-[19px] tracking-[0.8px] scale-x-[0.59]">GO TO G30</span></div>
            <div class="ml-[7px] mt-[16px] w-[181px] h-[2px] bg-[#b9b8b2]"></div>
          </div>

          <!-- step / jog panel -->
          <div class="absolute left-[684px] top-[719px] w-[350px] h-[300px] rounded-[5px] border-2 border-[#b8b7b0] bg-[#2e3436] pt-[25px] pl-[20px] font-['Liberation_Sans',sans-serif] font-bold">
            <div class="flex items-center">
              <span class="w-[34px] flex justify-center text-[#e6e6e6] text-[22px] tracking-[0.8px] whitespace-nowrap"><span class="inline-block scale-x-[0.56]">STEP</span></span>
              <div class="ml-[13px] w-[53px] h-[44px] flex items-center justify-center rounded-[3px] border border-[#a9a7a2] bg-linear-to-b from-white to-[#edebe8] text-black"><span class="inline-block text-[21px] scale-x-[0.72]">.0001</span></div>
              <div class="ml-[15px] w-[53px] h-[44px] flex items-center justify-center rounded-[3px] border border-[#a9a7a2] bg-linear-to-b from-white to-[#edebe8] text-black"><span class="inline-block text-[21px] scale-x-[0.72]">.0010</span></div>
              <div class="ml-[15px] w-[53px] h-[44px] flex items-center justify-center rounded-[3px] border border-[#a9a7a2] bg-linear-to-b from-white to-[#edebe8] text-black"><span class="inline-block text-[21px] scale-x-[0.72]">.0100</span></div>
              <div class="ml-[15px] w-[53px] h-[44px] flex items-center justify-center rounded-[3px] border border-[#a9a7a2] bg-linear-to-b from-white to-[#edebe8] text-black"><span class="inline-block text-[21px] scale-x-[0.72]">.1000</span></div>
            </div>
            <div class="mt-[23px] flex items-center">
              <div class="w-[157px] h-[20px] rounded-l-[4px] border border-[#8d8d8d] bg-linear-to-br from-[#c0c0ff] to-[#6060ff]"></div>
              <div class="ml-px w-[40px] h-[39px] rounded-[5px] border border-[#1c1c1c] bg-[repeating-linear-gradient(90deg,#424242_0,#424242_8px,#c0c0c0_8px,#c0c0c0_10px)]"></div>
              <div class="ml-px w-px h-[20px] bg-[#8d8d8d]"></div>
              <div class="ml-[10px] w-[40px] h-[35px] flex items-center justify-center rounded-[5px] bg-[#ececec] border border-[#a5a5a5] text-black"><span class="inline-block text-[21px] scale-x-[0.69]">100</span></div>
              <div class="ml-[9px] w-[48px] h-[40px] flex items-center justify-center rounded-[3px] border border-[#a9a7a2] bg-linear-to-b from-white to-[#edebe8] text-black"><span class="inline-block whitespace-nowrap text-[17px] scale-x-[0.66]">J 100%</span></div>
            </div>
            <div class="mt-[23px] flex">
              <div class="w-[45px] h-[30px] rounded-[3px] bg-white"></div>
              <div class="ml-[11px] w-[45px] h-[30px] rounded-[3px] bg-white"></div>
              <div class="ml-[97px] w-[70px] h-[30px] rounded-[3px] bg-[#dddbd8]"></div>
            </div>
          </div>

          <!-- spacer ticks peeking above the scrollbar -->
          <div class="absolute left-[243px] top-[878px] w-px h-[3px] bg-[#0000ff]"></div>
          <div class="absolute left-[349px] top-[878px] w-px h-[3px] bg-[#0000ff]"></div>
          <div class="absolute left-[573px] top-[878px] w-px h-[3px] bg-[#0000ff]"></div>
          <div class="absolute left-[677px] top-[878px] w-px h-[3px] bg-[#0000ff]"></div>
        </div>
      </div>

      <!-- mdi vertical scrollbar -->
      <div class="w-[14px] shrink-0 flex flex-col border-x border-[#bdbab5] bg-[#e4e2df]">
        <div class="h-[14px] bg-[#f4f2ef] border-b border-[#c3c0bb] flex items-center justify-center"><svg width="9" height="6" viewBox="0 0 10 6"><path d="M0 6h10L5 0z" fill="#4a4a4a"/></svg></div>
        <div class="h-[754px] bg-[#f9f8f6] border-b border-[#c3c0bb]"></div>
        <div class="flex-1"></div>
        <div class="h-[14px] bg-[#f4f2ef] border-t border-[#c3c0bb] flex items-center justify-center"><svg width="9" height="6"><use href="#tri"/></svg></div>
      </div>
    </div>

    <!-- mdi horizontal scrollbar -->
    <div class="h-[15px] shrink-0 flex border-y border-[#bdbab5] border-l">
      <div class="w-[14px] bg-[#f4f2ef] border-r border-[#c3c0bb] flex items-center justify-center"><svg width="6" height="9" viewBox="0 0 6 10"><path d="M6 0v10L0 5z" fill="#4a4a4a"/></svg></div>
      <div class="w-[366px] bg-[#e4e2df]"></div>
      <div class="w-[664px] bg-linear-to-b from-white to-[#f1efec]"></div>
      <div class="w-[14px] bg-[#f4f2ef] border-x border-[#c3c0bb] flex items-center justify-center"><svg width="6" height="9" viewBox="0 0 6 10"><path d="M0 0v10l6-5z" fill="#4a4a4a"/></svg></div>
      <div class="flex-1 border-r border-[#bdbab5]"></div>
    </div>
  </div>

  <!-- right docks -->
  <div class="flex-1 flex flex-col pl-[8px]">
    <div class="h-[21px] shrink-0 flex items-center justify-between pl-[3px] pr-[2px]">
      <span>Property Editor</span>
      <span class="flex gap-[3px]"><svg width="12" height="14"><use href="#flt"/></svg><svg width="12" height="14"><use href="#cls"/></svg></span>
    </div>
    <div class="mt-[7px] h-[22px] shrink-0 flex items-center">
      <div class="ml-[3px] w-[489px] h-full flex items-center pl-[3px] rounded-[3px] bg-white border border-[#bdbab5] text-[#a2a2a2]">Filter</div>
      <div class="relative ml-[5px] w-[24px] h-[24px]"><svg width="24" height="24"><use href="#plus"/></svg><svg class="absolute right-[-3px] bottom-0" width="6" height="4"><use href="#tri"/></svg></div>
      <svg class="ml-[9px]" width="24" height="12"><use href="#minus"/></svg>
      <div class="relative ml-[9px] w-[24px] h-[24px]"><svg width="24" height="24" viewBox="0 0 24 24"><path d="M2 23l2-3 11-12a5 5 0 0 1 6-6l-3 3 1 3 3 0 2-3a5 5 0 0 1-6 6L5 23z" fill="#d8d6d2" stroke="#7d7b77"/></svg><svg class="absolute right-[-4px] bottom-0" width="6" height="4"><use href="#tri"/></svg></div>
    </div>
    <div class="mt-[10px] h-[17px] shrink-0 flex items-center pl-[2px] border border-[#bdbab5] border-r-0">Form : VCPMainWindow</div>
    <div class="mt-[2px] h-[321px] shrink-0 flex overflow-hidden border-l border-b border-[#bdbab5]">
      <div class="w-[580px] shrink-0 flex flex-col overflow-hidden">
        <div class="h-[18px] shrink-0 flex border-y border-[#c9c6c1] bg-linear-to-b from-white to-[#eeebe7]">
          <div class="w-[168px] pl-[2px] flex items-center border-r border-[#c9c6c1]">Property</div>
          <div class="pl-[2px] flex items-center">Value</div>
        </div>
        <div id="propRows"></div>
      </div>
      <div class="flex-1 flex flex-col border-x border-[#c9c6c1] bg-[#e4e2df]">
        <div class="h-[17px] bg-[#f4f2ef] border-y border-[#c9c6c1] flex items-center justify-center"><svg width="9" height="6" viewBox="0 0 10 6"><path d="M0 6h10L5 0z" fill="#4a4a4a"/></svg></div>
        <div class="h-[75px] bg-[#f9f8f6] border-b border-[#c9c6c1]"></div>
        <div class="flex-1"></div>
        <div class="h-[15px] bg-[#f4f2ef] border-t border-[#c9c6c1] flex items-center justify-center"><svg width="9" height="6"><use href="#tri"/></svg></div>
      </div>
    </div>
    <div class="h-[23px] shrink-0 flex items-start">
      <div class="w-[118px] h-[23px] flex items-center justify-center rounded-b-[3px] border border-t-0 border-[#bdbab5] bg-[#f3f0ed]">Property Editor</div>
      <div class="w-[127px] h-[21px] flex items-center justify-center rounded-b-[3px] border border-t-0 border-l-0 border-[#bdbab5] bg-[#dcd9d6]">Object Inspector</div>
    </div>
    <div class="h-[7px] shrink-0 flex items-center justify-center pr-[6px]"><div class="w-[16px] h-[2px] bg-[radial-gradient(#a5a29d_0.7px,transparent_0.9px)] bg-[length:3px_2px]"></div></div>

    <div class="h-[21px] shrink-0 flex items-center justify-between pl-[3px] pr-[2px]">
      <span>Resource Browser</span>
      <span class="flex gap-[3px]"><svg width="12" height="14"><use href="#flt"/></svg><svg width="12" height="14"><use href="#cls"/></svg></span>
    </div>
    <div class="mt-[6px] h-[22px] shrink-0 flex items-center">
      <svg class="ml-[6px]" width="24" height="26" viewBox="0 0 24 26"><path d="M3 24l2-6L18 3l4 3L8 21z" fill="#e9b437" stroke="#a5741a"/><path d="M18 3l4 3-2 2-4-3z" fill="#d65a2a"/><path d="M3 24l2-6 3 3z" fill="#f4dfb0"/></svg>
      <svg class="ml-[7px]" width="24" height="24" viewBox="0 0 24 24"><path d="M20 8a9 9 0 1 0 0 9l-4-2a5 5 0 1 1 0-5l-3 2 9 3 0-9z" fill="url(#green)" stroke="#0f7d12"/></svg>
      <div class="ml-[266px] w-[263px] h-full flex items-center pl-[3px] rounded-[3px] bg-white border border-[#bdbab5] text-[#a2a2a2]">Filter</div>
    </div>
    <div class="mt-[8px] h-[70px] shrink-0 flex gap-[4px]">
      <div class="w-[295px] bg-white border border-[#bdbab5]">
        <div class="flex items-center h-[13px]"><svg class="ml-[5px]" width="9" height="6"><use href="#tri"/></svg><span class="ml-[8px]">&lt;resource root&gt;</span></div>
        <div class="pl-[42px] mt-[1px] h-[14px] flex items-center">images</div>
      </div>
      <div class="flex-1 bg-white border border-[#bdbab5] border-r-0"></div>
    </div>
    <div class="h-[5px] shrink-0 flex items-center justify-center pr-[6px]"><div class="w-[16px] h-[2px] bg-[radial-gradient(#a5a29d_0.7px,transparent_0.9px)] bg-[length:3px_2px]"></div></div>

    <div class="h-[21px] shrink-0 flex items-center justify-between pl-[3px] pr-[2px]">
      <span>Signal/Slot Editor</span>
      <span class="flex gap-[3px]"><svg width="12" height="14"><use href="#flt"/></svg><svg width="12" height="14"><use href="#cls"/></svg></span>
    </div>
    <div class="mt-[7px] h-[20px] shrink-0 flex items-center">
      <svg class="ml-[7px]" width="22" height="22"><use href="#plus"/></svg>
      <svg class="ml-[10px]" width="21" height="10" viewBox="0 0 24 12"><use href="#minus"/></svg>
    </div>
    <div class="mt-[10px] h-[295px] shrink-0 flex flex-col border border-r-0 border-[#bdbab5] bg-white">
      <div class="h-[18px] shrink-0 flex border-b border-[#c9c6c1] bg-linear-to-b from-white to-[#eeebe7]">
        <div class="w-[100px] flex items-center justify-between pl-[2px] pr-[5px] border-r border-[#c9c6c1]"><span>Sender</span><svg width="8" height="5" viewBox="0 0 10 6"><path d="M0 6h10L5 0z" fill="#4a4a4a"/></svg></div>
        <div class="w-[100px] flex items-center pl-[2px] border-r border-[#c9c6c1]">Signal</div>
        <div class="w-[100px] flex items-center pl-[2px] border-r border-[#c9c6c1]">Receiver</div>
        <div class="flex items-center pl-[2px]">Slot</div>
      </div>
      <div class="h-[14px] flex items-center">
        <span class="w-[100px] pl-[2px]">jog_fr_slider</span><span class="w-[100px] pl-[2px]">valueC...d(int)</span><span class="w-[100px] pl-[3px]">jog_fr_dro</span><span class="pl-[3px]">setNum(int)</span>
      </div>
    </div>
    <div class="h-[24px] shrink-0 flex items-start">
      <div class="w-[131px] h-[24px] flex items-center justify-center rounded-b-[3px] border border-t-0 border-[#bdbab5] bg-[#f3f0ed]">Signal/Slot Editor</div>
      <div class="w-[103px] h-[22px] flex items-center justify-center rounded-b-[3px] border border-t-0 border-l-0 border-[#bdbab5] bg-[#dcd9d6]">Action Editor</div>
    </div>
  </div>
</div>

<script>
  // these icons carry a bit of real text, so they are drawn in place rather than through <use>
  const textIcons = {
    ok: `<svg class="shrink-0" width="22" height="22" viewBox="0 0 22 22"><rect x="2" y="1.5" width="18" height="19" rx="2" fill="url(#paper)" stroke="#444"/><text x="11" y="14.5" text-anchor="middle" font-size="8.5" font-family="DejaVu Sans" fill="#111">OK</text></svg>`,
    le: `<svg class="shrink-0" width="22" height="22" viewBox="0 0 22 22"><rect x="1" y="5" width="20" height="12" rx="2" fill="#fff" stroke="#333" stroke-width="1.5"/><text x="8.5" y="14" text-anchor="middle" font-size="7" font-family="DejaVu Sans" font-weight="bold" fill="#111">AB</text><path d="M17 7.5v7M15.5 7.5h3M15.5 14.5h3" stroke="#111"/></svg>`,
    te: `<svg class="shrink-0" width="22" height="22" viewBox="0 0 22 22"><rect x="1.5" y="1.5" width="19" height="19" rx="2" fill="url(#paper)" stroke="#777"/><text x="8" y="17" text-anchor="middle" font-size="15" font-family="Liberation Serif" fill="#2f8a2f">A</text><path d="M16.5 4v13M14 4h5M14 17h5" stroke="#222"/></svg>`
  };
  const sections = [
    ["Layouts", [["vl","Vertical Layout"],["hl","Horizontal Layout"],["gl","Grid Layout"],["fl","Form Layout"]]],
    ["Spacers", [["hs","Horizontal Spacer"],["vs","Vertical Spacer"]]],
    ["Buttons", [["ok","Push Button"],["tb","Tool Button"],["rb","Radio Button"],["cb","Check Box"],["cl","Command Link Button"],["db","Dialog Button Box"]]],
    ["Item Views (Model-Based)", [["lv","List View"],["tv","Tree View"],["tbv","Table View"],["cv","Column View"]]],
    ["Item Widgets (Item-Based)", [["lv","List Widget"],["tv","Tree Widget"],["tbv","Table Widget"]]],
    ["Containers", [["gb","Group Box"],["sa","Scroll Area"],["tx","Tool Box"],["tw","Tab Widget"],["sw","Stacked Widget"],["fr","Frame"],["wd","Widget"],["mdi","MDI Area"],["dw","Dock Widget"]]],
    ["Input Widgets", [["co","Combo Box"],["fc","Font Combo Box"],["le","Line Edit"],["te","Text Edit"],["gb",""]]]
  ];
  document.getElementById("widgetTree").innerHTML = sections.map(([name, items]) => `
    <div class="relative h-[17px] flex items-center justify-center pl-[15px] border-y border-[#b6b3ae] bg-linear-to-b from-[#f3f0ed] to-[#e4e1dd]">
      <svg class="absolute left-[4px] top-[5px]" width="9" height="6"><use href="#tri"/></svg>${name}
    </div>
    ${items.map(([icon, label]) => `
      <div class="h-[24px] flex items-center pl-[4px]">${textIcons[icon] || `<svg class="shrink-0" width="22" height="22"><use href="#${icon}"/></svg>`}<span class="ml-[6px]">${label}</span></div>
    `).join("")}
  `).join("");

  // [label, value, kind, indent, arrow, bold, disabled]
  const props = [
    ["QObject","", "group",0,true],
    ["objectName","Form","name",0,false],
    ["QWidget","", "group",0,true],
    ["windowModality","NonModal","a",0,false],
    ["enabled","__check","b",0,false],
    ["geometry","[(0, 0), 2356 x 1109]","a",0,true,true],
    ["X","0","b",1,false,false,true],
    ["Y","0","a",1,false,false,true],
    ["Width","2356","b",1],
    ["Height","1109","a",1],
    ["sizePolicy","[Preferred, Preferred, 0, 0]","b",0,true],
    ["Horizontal Policy","Preferred","a",1],
    ["Vertical Policy","Preferred","b",1],
    ["Horizontal Stretch","0","a",1],
    ["Vertical Stretch","0","b",1],
    ["minimumSize","0 x 0","a",0,true],
    ["Width","0","b",1]
  ];
  const rowBg = { group: "bg-[#9b9a95] text-[#ececec] font-bold", name: "bg-[#fff0e0]", a: "bg-[#ffffdc]", b: "bg-[#ffffbf]" };
  document.getElementById("propRows").innerHTML = props.map(([label, value, kind, indent, arrow, bold, off]) => `
    <div class="relative h-[18px] flex items-center border-b border-[#c9c6c1] ${rowBg[kind]} ${off ? "text-[#c0c0b0]" : ""}">
      ${arrow ? `<svg class="absolute left-[5px] top-[5px]" width="9" height="6"><use href="#tri"/></svg>` : ""}
      <div class="h-full flex items-center ${kind === "group" ? "" : "w-[168px] border-r border-[#c9c6c1]"} ${indent ? "pl-[41px]" : "pl-[21px]"} ${bold || kind === "name" ? "font-bold" : ""}">${label}</div>
      ${kind === "group" ? "" : value === "__check"
        ? `<div class="ml-[4px] w-[13px] h-[13px] flex items-center justify-center bg-white border border-[#bdbab5]"><svg width="9" height="10" viewBox="0 0 9 10"><path d="M2 5l2 4 3-8" fill="none" stroke="#111" stroke-width="1.6"/></svg></div>`
        : `<div class="pl-[3px]">${value}</div>`}
    </div>
  `).join("");
</script>
</body>
</html>
